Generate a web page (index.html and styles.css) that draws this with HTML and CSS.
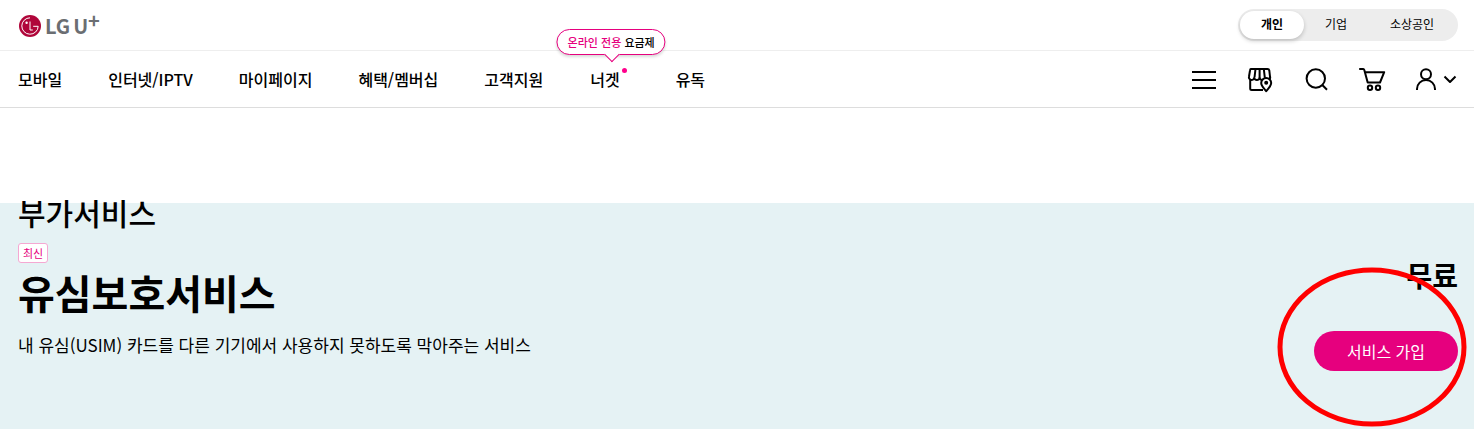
FILE: index.html
```html
<!DOCTYPE html>
<html lang="ko">
<head>
    <meta charset="utf-8">
    <meta name="viewport" content="width=device-width, initial-scale=1">
    <title>유심보호서비스 | LG U+</title>
    <link rel="stylesheet" href="styles.css">
</head>
<body>
    <header>
        <div class="top-bar">
            <a href="#" class="logo" aria-label="LG U+">
                <svg class="logo-mark" viewBox="0 0 22 22" aria-hidden="true">
                    <circle cx="11" cy="11" r="11" fill="#b0063a"/>
                    <path d="M11 2.8A8.2 8.2 0 1 0 19.2 11.3H14.2" fill="none" stroke="#fff" stroke-width="1"/>
                    <path d="M11 6.5V15H13.8" fill="none" stroke="#fff" stroke-width="1"/>
                    <circle cx="7.6" cy="7.8" r="1.2" fill="#fff"/>
                </svg>
                <span class="logo-text">LG</span><span class="logo-text logo-u">U</span><span class="logo-plus">+</span>
            </a>
            <div class="segment">
                <a href="#" class="active">개인</a>
                <a href="#">기업</a>
                <a href="#" class="wide">소상공인</a>
            </div>
        </div>
        <div class="main-bar">
            <nav class="menu">
                <a href="#">모바일</a>
                <a href="#">인터넷/IPTV</a>
                <a href="#">마이페이지</a>
                <a href="#">혜택/멤버십</a>
                <a href="#">고객지원</a>
                <a href="#" class="has-dot">너겟
                    <span class="bubble"><em>온라인 전용</em> 요금제</span>
                </a>
                <a href="#">유독</a>
            </nav>
            <div class="tools">
                <button type="button" aria-label="전체메뉴">
                    <svg class="icon" viewBox="0 0 28 28"><path d="M2 7H26M2 15H26M2 23H26"/></svg>
                </button>
                <button type="button" aria-label="매장찾기">
                    <svg class="icon" viewBox="0 0 28 28">
                        <path d="M4.8 4H21.5Q23 4 23.3 5.5L24 11.5A2.6 2.6 0 0 1 19 13A2.8 2.8 0 0 1 13.6 13A2.8 2.8 0 0 1 8.2 13A2.7 2.7 0 0 1 3 11.5L4 5.5Q4.2 4 4.8 4Z"/>
                        <path d="M9.5 4L8.5 12.5M13.6 4V13M17.8 4L18.8 12.5M4.2 14.5V23.5Q4.2 25 5.7 25H17"/>
                        <path d="M20.2 13A5 5 0 0 1 25.2 18C25.2 21.2 22.2 23.5 20.2 26.2C18.2 23.5 15.2 21.2 15.2 18A5 5 0 0 1 20.2 13Z" fill="#fff"/>
                        <circle cx="20.2" cy="17.8" r="1" fill="#000"/>
                    </svg>
                </button>
                <button type="button" aria-label="검색">
                    <svg class="icon" viewBox="0 0 28 28"><circle cx="13.8" cy="13.5" r="9.2"/><path d="M20.3 20L25 24.7"/></svg>
                </button>
                <button type="button" aria-label="장바구니">
                    <svg class="icon" viewBox="0 0 28 28">
                        <path d="M1.2 4H5.2Q6 4 6.3 5L9.7 17.5H22L26.2 7.2H7"/>
                        <circle cx="12" cy="22.8" r="2.2"/><circle cx="20" cy="22.8" r="2.2"/>
                    </svg>
                </button>
                <button type="button" aria-label="내 정보">
                    <svg class="icon user" viewBox="0 0 24 28"><circle cx="12" cy="9.2" r="5"/><path d="M3 25V24A9 9 0 0 1 21 24V25"/></svg>
                    <svg class="icon chevron" viewBox="0 0 16 28"><path d="M2.5 11.5L8 17L13.5 11.5"/></svg>
                </button>
            </div>
        </div>
    </header>

    <main class="hero">
        <div class="hero-text">
            <p class="category">부가서비스</p>
            <span class="badge">최신</span>
            <h1>유심보호서비스</h1>
            <p class="desc">내 유심(USIM) 카드를 다른 기기에서 사용하지 못하도록 막아주는 서비스</p>
        </div>
        <div class="hero-join">
            <strong class="price">무료</strong>
            <button type="button" class="join-button">서비스 가입</button>
            <svg class="mark" viewBox="0 0 190 160" aria-hidden="true">
                <ellipse cx="95" cy="80" rx="92" ry="77" fill="none" stroke="#f00" stroke-width="5"/>
            </svg>
        </div>
    </main>
</body>
</html>
```
FILE: styles.css
```css
* {
    box-sizing: border-box;
}
body {
    display: flex;
    flex-direction: column;
    min-height: 100vh;
    margin: 0;
    background: #fff;
    color: #000;
    font-family: "Noto Sans CJK KR", "Noto Sans", sans-serif;
    font-size: 16px;
    line-height: 24px;
}
a {
    color: inherit;
    text-decoration: none;
}
button {
    border: none;
    padding: 0;
    font: inherit;
    cursor: pointer;
}
.top-bar,
.main-bar {
    display: flex;
    justify-content: space-between;
    align-items: center;
    padding: 0 16px 0 18px;
}
.top-bar {
    height: 51px;
    border-bottom: 1px solid #eee;
}
.main-bar {
    height: 57px;
    border-bottom: 1px solid #ddd;
}

/* logo */
.logo {
    display: flex;
    align-items: center;
    padding: 2px 0 0 1px;
    color: #6b6e72;
    font-weight: 700;
}
.logo-mark {
    width: 22px;
    height: 22px;
    margin-right: 4px;
}
.logo-text {
    font-size: 20px;
}
.logo-u {
    margin-left: 3px;
}
.logo-plus {
    font-size: 20px;
    line-height: 12px;
    align-self: flex-start;
}

/* customer type */
.segment {
    display: flex;
    height: 32px;
    padding: 2px;
    border-radius: 16px;
    background: #ededed;
    font-size: 12px;
    line-height: 26px;
    text-align: center;
}
.segment a {
    width: 64px;
    border-radius: 14px;
}
.segment .wide {
    width: 88px;
}
.segment .active {
    height: 28px;
    background: #fff;
    box-shadow: 0 2px 4px rgba(0, 0, 0, 0.2);
    font-weight: 700;
}

/* menu */
.menu {
    display: flex;
    gap: 46px;
    font-weight: 500;
}
.has-dot {
    position: relative;
    padding: 0 10px 0 1px;
}
.has-dot::after {
    content: "";
    position: absolute;
    top: 1px;
    right: 3px;
    width: 5px;
    height: 5px;
    border-radius: 50%;
    background: #ff008c;
}
.bubble {
    position: absolute;
    bottom: 36px;
    left: 22px;
    transform: translateX(-50%);
    padding: 0 10px;
    border: 1px solid #e6007e;
    border-radius: 13px;
    background: #fff;
    box-shadow: 0 2px 3px rgba(0, 0, 0, 0.15);
    font-size: 11px;
    white-space: nowrap;
}
.bubble em {
    color: #e6007e;
    font-style: normal;
}
.bubble::after {
    content: "";
    position: absolute;
    bottom: -6px;
    left: 50%;
    width: 10px;
    height: 10px;
    margin-left: -5px;
    border: solid #e6007e;
    border-width: 0 1px 1px 0;
    background: #fff;
    transform: rotate(45deg);
}
.tools {
    display: flex;
    gap: 28px;
}
.tools button {
    display: flex;
    gap: 4px;
    background: none;
}
.icon {
    width: 28px;
    height: 28px;
    fill: none;
    stroke: #000;
    stroke-width: 2;
    stroke-linejoin: round;
}
.icon.user {
    width: 24px;
}
.icon.chevron {
    width: 16px;
}

/* service */
.hero {
    display: flex;
    flex: 1;
    justify-content: space-between;
    margin-top: 95px;
    padding: 0 16px 0 18px;
    background: #e5f2f4;
}
.hero-text {
    display: flex;
    flex-direction: column;
    align-items: flex-start;
}
.category {
    margin: -12px 0 0;
    font-size: 30px;
    font-weight: 500;
    line-height: 42px;
}
.badge {
    margin-top: 10px;
    padding: 0 4px;
    border: 1px solid #f5a8d2;
    border-radius: 3px;
    background: #fff;
    color: #e6007e;
    font-size: 11px;
    line-height: 18px;
}
h1 {
    margin: 0;
    font-size: 40px;
    line-height: 58px;
}
.desc {
    margin: 12px 0 0;
    font-size: 17px;
}
.hero-join {
    position: relative;
    display: flex;
    flex-direction: column;
    align-items: flex-end;
    padding-top: 52px;
}
.price {
    font-size: 28px;
    line-height: 40px;
}
.join-button {
    width: 144px;
    height: 40px;
    margin-top: 36px;
    border-radius: 20px;
    background: #e6007e;
    color: #fff;
}
.mark {
    position: absolute;
    top: 64px;
    right: -9px;
    width: 190px;
    height: 160px;
    pointer-events: none;
}
```
